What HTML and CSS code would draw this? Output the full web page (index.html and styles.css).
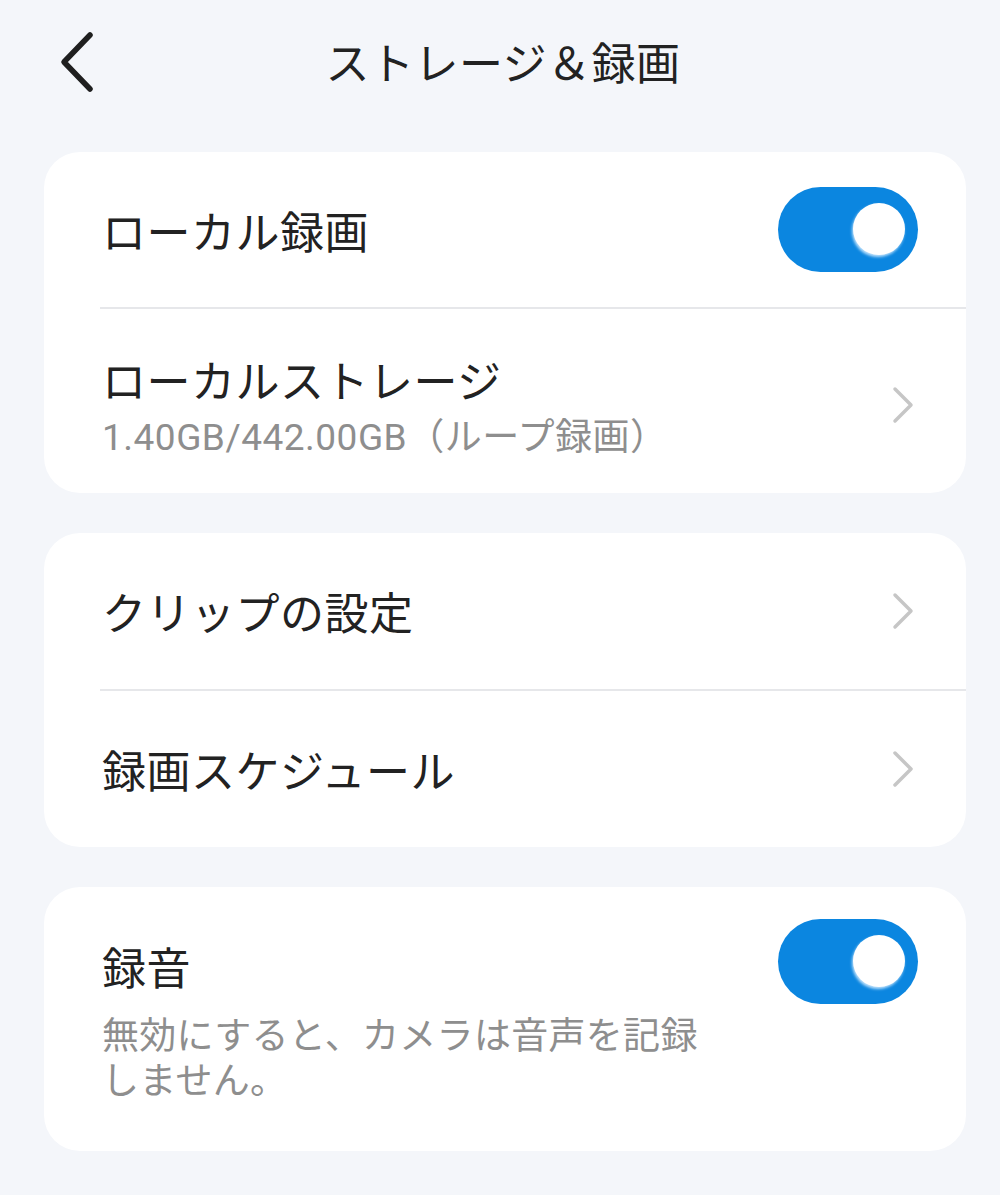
FILE: index.html
```html
<!DOCTYPE html>
<html lang="ja">
<head>
    <meta charset="UTF-8">
    <meta name="viewport" content="width=device-width, initial-scale=1.0">
    <title>ストレージ＆録画</title>
    <link rel="stylesheet" href="styles.css">
</head>
<body>
    <header class="top-bar">
        <button class="back-btn" aria-label="戻る">
            <svg width="40" height="64" viewBox="0 0 40 64">
                <path d="M32 5 L6 32 L32 59" fill="none" stroke="#1f1f1f" stroke-width="5.5" stroke-linecap="round" stroke-linejoin="round"/>
            </svg>
        </button>
        <h1 class="page-title">ストレージ＆録画</h1>
    </header>

    <section class="card">
        <div class="row row-short">
            <span class="label">ローカル録画</span>
            <div class="toggle on"><span class="knob"></span></div>
        </div>
        <div class="divider"></div>
        <div class="row row-tall">
            <div class="text">
                <span class="label">ローカルストレージ</span>
                <span class="sub">1.40GB/442.00GB（ループ録画）</span>
            </div>
            <svg class="chev" width="24" height="38" viewBox="0 0 24 38">
                <path d="M4 3 L20 19 L4 35" fill="none" stroke="#c6c6c6" stroke-width="3.5" stroke-linecap="round" stroke-linejoin="round"/>
            </svg>
        </div>
    </section>

    <section class="card">
        <div class="row row-short row-link">
            <span class="label">クリップの設定</span>
            <svg class="chev" width="24" height="38" viewBox="0 0 24 38">
                <path d="M4 3 L20 19 L4 35" fill="none" stroke="#c6c6c6" stroke-width="3.5" stroke-linecap="round" stroke-linejoin="round"/>
            </svg>
        </div>
        <div class="divider"></div>
        <div class="row row-short row-link">
            <span class="label">録画スケジュール</span>
            <svg class="chev" width="24" height="38" viewBox="0 0 24 38">
                <path d="M4 3 L20 19 L4 35" fill="none" stroke="#c6c6c6" stroke-width="3.5" stroke-linecap="round" stroke-linejoin="round"/>
            </svg>
        </div>
    </section>

    <section class="card">
        <div class="row row-top">
            <div class="text">
                <span class="label label-top">録音</span>
                <span class="desc">無効にすると、カメラは音声を記録しません。</span>
            </div>
            <div class="toggle on"><span class="knob"></span></div>
        </div>
    </section>
</body>
</html>
```

FILE: styles.css
```css
body {
    margin: 0;
    background-color: #f4f6fa;
    font-family: "Noto Sans CJK JP", "Noto Sans", sans-serif;
    color: #222;
}
.top-bar {
    position: relative;
    height: 152px;
    display: flex;
    align-items: center;
    justify-content: center;
}
.back-btn {
    position: absolute;
    left: 58px;
    top: 30px;
    padding: 0;
    border: none;
    background: none;
}
.page-title {
    margin: 0 0 30px 6px;
    font-size: 44px;
    font-weight: normal;
    color: #222;
    line-height: 60px;
    letter-spacing: 0.5px;
}
.card {
    background-color: #fff;
    border-radius: 36px;
    margin: 0 34px 40px 44px;
    overflow: hidden;
}
.row {
    display: flex;
    align-items: center;
    justify-content: space-between;
    padding: 0 48px 0 58px;
}
.row-short {
    height: 155px;
}
.row-link {
    height: 156px;
}
.row-tall {
    height: 184px;
    box-sizing: border-box;
    padding-top: 8px;
    padding-right: 51px;
}
.row-short .chev {
    margin-right: 3px;
}
.row-top {
    align-items: flex-start;
    padding-top: 32px;
    padding-bottom: 50px;
}
.text {
    display: flex;
    flex-direction: column;
}
.label {
    font-size: 44px;
    line-height: 56px;
    letter-spacing: 0.5px;
}
.label-top {
    margin-top: 19px;
    margin-bottom: 17px;
}
.sub {
    margin-top: 8px;
    font-family: Roboto, "Noto Sans CJK JP", sans-serif;
    font-size: 37px;
    line-height: 45px;
    letter-spacing: 0.5px;
    color: #8e8e8e;
}
.desc {
    width: 610px;
    font-size: 37px;
    line-height: 45px;
    letter-spacing: 0.3px;
    color: #8e8e8e;
}
.divider {
    height: 2px;
    background-color: #e6e7ea;
    margin-left: 56px;
}
.toggle {
    position: relative;
    width: 140px;
    height: 85px;
    border-radius: 43px;
    background-color: #0b86e0;
    flex-shrink: 0;
}
.knob {
    position: absolute;
    top: 16px;
    right: 13px;
    width: 52px;
    height: 52px;
    border-radius: 50%;
    background-color: #fff;
    box-shadow: -1px 2px 3px rgba(210, 235, 255, 0.9);
}
```
